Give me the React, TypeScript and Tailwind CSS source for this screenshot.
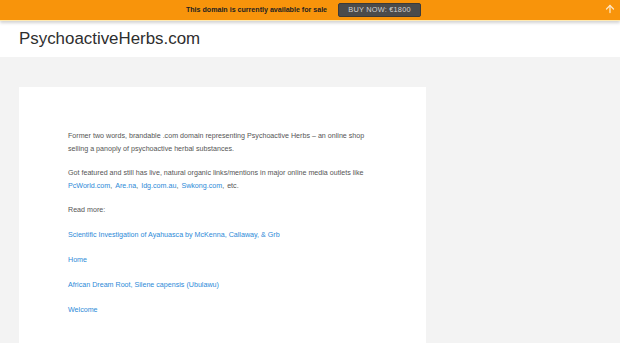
import { ArrowUp } from 'lucide-react';

const READ_MORE = [
    'Scientific Investigation of Ayahuasca by McKenna, Callaway, & Grb',
    'Home',
    'African Dream Root, Silene capensis (Ubulawu)',
    'Welcome',
];

const OUTLETS = ['PcWorld.com', 'Are.na', 'Idg.com.au', 'Swkong.com'];

export default function App() {
    return (
        <div className="min-h-[343px] bg-[#f3f3f3] font-['Liberation_Sans',Arial,sans-serif]">
            {/* Sale banner */}
            <div className="relative z-10 flex h-[21px] items-center justify-center border-b border-[#ffe9b0] bg-[#f8940b] shadow-[0_2px_3px_rgba(0,0,0,0.18)]">
                <div className="mr-[13px] flex items-center gap-[11px]">
                    <span className="text-[7.1px] font-bold text-[#222]">This domain is currently available for sale</span>
                    <button className="h-[14px] w-[83px] rounded-[2px] border border-[#3a3a3a] bg-[#4b4b4b] text-[7.4px] tracking-[0.2px] text-[#d2d2d2]">
                        BUY NOW: €1800
                    </button>
                </div>
                <ArrowUp className="absolute right-[4px] top-[3px] text-[#fde6c4]" size={12} strokeWidth={2.6} />
            </div>

            {/* Header */}
            <header className="flex h-[36px] items-center bg-white px-[19px] pt-[1px]">
                <h1 className="text-[16.9px] leading-none text-[#2e2e2e]">PsychoactiveHerbs.com</h1>
            </header>

            {/* Content */}
            <main className="px-[19px] pt-[30px]">
                <div className="w-[407px] bg-white pb-[30px] pl-[49px] pr-[40px] pt-[43px] text-[7.13px] leading-[13px] text-[#555]">
                    <p className="mb-[11px]">
                        Former two words, brandable .com domain representing Psychoactive Herbs – an online shop selling a panoply of psychoactive herbal substances.
                    </p>
                    <p className="mb-[11px]">
                        Got featured and still has live, natural organic links/mentions in major online media outlets like{' '}
                        {OUTLETS.map((o, i) => (
                            <span key={o}>
                                <a className={i === 0 ? 'text-[#2d8ad8]' : 'ml-[1px] text-[#2d8ad8]'}>{o}</a>,{' '}
                            </span>
                        ))}
                        <span className="ml-[1px]">etc.</span>
                    </p>
                    <p className="mb-[12px]">Read more:</p>
                    {READ_MORE.map((item) => (
                        <p key={item} className="mb-[12px]">
                            <a className="text-[#2d8ad8]">{item}</a>
                        </p>
                    ))}
                </div>
            </main>
        </div>
    );
}
